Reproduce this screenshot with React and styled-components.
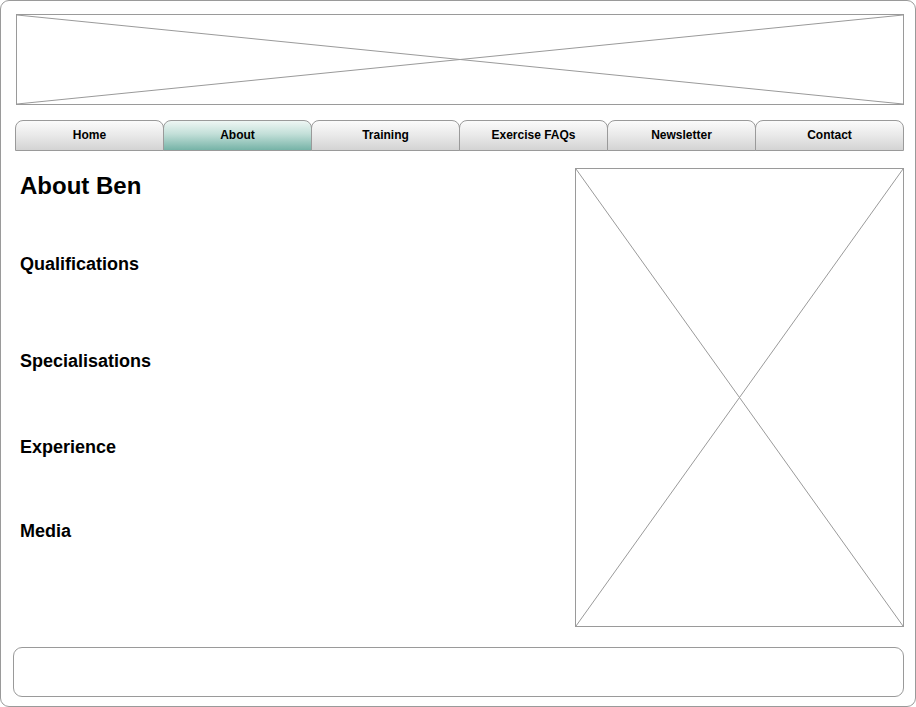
import React from 'react';
import styled, { createGlobalStyle } from 'styled-components';

const GlobalStyle = createGlobalStyle`
    html, body {
        margin: 0;
        padding: 0;
        background: #fff;
    }
    * {
        box-sizing: border-box;
    }
`;

const Frame = styled.div`
    width: 916px;
    height: 707px;
    border: 1px solid #9a9a9a;
    border-radius: 9px;
    padding: 13px 11px 0 12px;
    font-family: "Liberation Sans", Arial, sans-serif;
    color: #000;
    background: #fff;
`;

const Placeholder = styled.div`
    position: relative;
    border: 1px solid #9a9a9a;
    width: ${p => p.$w}px;
    height: ${p => p.$h}px;
    margin-left: ${p => p.$ml || 0}px;
    flex-shrink: 0;

    svg {
        display: block;
        width: 100%;
        height: 100%;
    }
`;

const Nav = styled.nav`
    display: flex;
    width: 889px;
    height: 31px;
    margin: 15px 0 0 2px;
`;

const Tab = styled.div`
    flex: 1;
    margin-left: -1px;
    &:first-child {
        margin-left: 0;
    }
    border: 1px solid #9a9a9a;
    border-radius: 8px 8px 0 0;
    background: ${p => p.$active
        ? 'linear-gradient(to bottom, #eef6f4 0%, #c2dfd8 45%, #76b3a7 100%)'
        : 'linear-gradient(to bottom, #fbfbfb 0%, #e9e9e9 50%, #d3d3d3 100%)'};
    display: flex;
    align-items: center;
    justify-content: center;
    padding-bottom: 2px;
    font-size: 12px;
    font-weight: bold;
`;

const Content = styled.div`
    display: flex;
    justify-content: space-between;
    margin-top: 17px;
`;

const TextColumn = styled.div`
    padding-left: 7px;
`;

const Title = styled.h1`
    margin: 6px 0 0 0;
    font-size: 24px;
    line-height: 1;
    font-weight: bold;
`;

const SectionHeading = styled.h2`
    margin: ${p => p.$top}px 0 0 0;
    font-size: 18px;
    line-height: 1;
    font-weight: bold;
`;

const Footer = styled.footer`
    width: 891px;
    height: 50px;
    margin-top: 20px;
    border: 1px solid #9a9a9a;
    border-radius: 9px;
`;

const Cross = () => (
    <svg preserveAspectRatio="none">
        <line x1="0" y1="0" x2="100%" y2="100%" stroke="#9a9a9a" strokeWidth="1" />
        <line x1="0" y1="100%" x2="100%" y2="0" stroke="#9a9a9a" strokeWidth="1" />
    </svg>
);

const tabs = ['Home', 'About', 'Training', 'Exercise FAQs', 'Newsletter', 'Contact'];

const sections = [
    { title: 'Qualifications', top: 57 },
    { title: 'Specialisations', top: 79 },
    { title: 'Experience', top: 68 },
    { title: 'Media', top: 66 },
];

const App = () => {
    return (
        <>
            <GlobalStyle />
            <Frame>
                <Placeholder $w={888} $h={91} $ml={3}>
                    <Cross />
                </Placeholder>

                <Nav>
                    {tabs.map(t => (
                        <Tab key={t} $active={t === 'About'}>{t}</Tab>
                    ))}
                </Nav>

                <Content>
                    <TextColumn>
                        <Title>About Ben</Title>
                        {sections.map(s => (
                            <SectionHeading key={s.title} $top={s.top}>{s.title}</SectionHeading>
                        ))}
                    </TextColumn>
                    <Placeholder $w={329} $h={459}>
                        <Cross />
                    </Placeholder>
                </Content>

                <Footer />
            </Frame>
        </>
    );
};

export default App;
